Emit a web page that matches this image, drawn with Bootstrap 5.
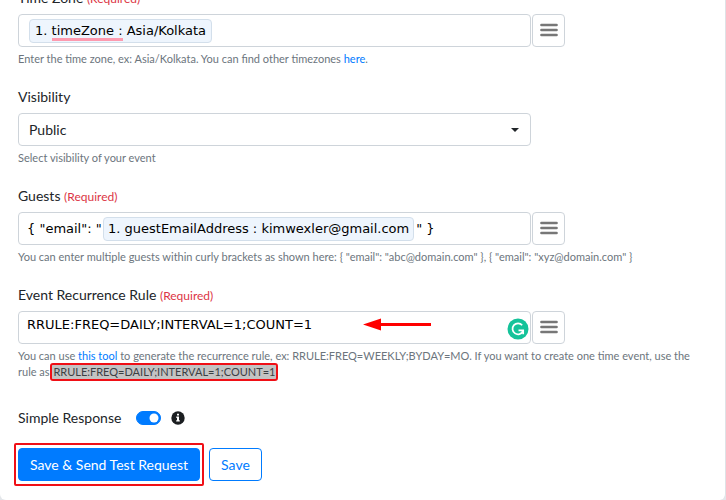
<!DOCTYPE html>
<html lang="en">
<head>
<meta charset="utf-8">
<meta name="viewport" content="width=device-width, initial-scale=1">
<title>Event settings</title>
<link href="https://cdn.jsdelivr.net/npm/bootstrap@5.3.0/dist/css/bootstrap.min.css" rel="stylesheet">
<style>
:root { --line: #ced4da; --blue: #007bff; }
body { background: #e3e6ea; font-family: Lato, "Open Sans", sans-serif; font-size: 14px; line-height: 20px; color: #212529; height: 100vh; overflow: hidden; }
a { color: var(--blue); text-decoration: none; }
.panel { background: #fff; border-right: 1px solid #dee2e6; border-radius: 0 0 6px 6px; padding: 0 18px; height: 100vh; display: flow-root; }
/* the form is shown scrolled slightly past its first label */
.scrolled { margin-top: -12px; }
.group { margin-bottom: 20px; }
.group-label { display: block; margin-bottom: 6px; line-height: 20px; font-size: 14px; }
.req { color: #dc3545; font-size: 12px; line-height: 14px; }
.hint { color: #6c757d; font-size: 11px; line-height: 16px; margin-top: 4px; padding-right: 12px; }
.field-row { max-width: 547px; gap: 1px; }
.field { border: 1px solid var(--line); border-radius: 4px; height: 33px; padding: 0 8px; min-width: 0; font-family: "DejaVu Sans", Verdana, sans-serif; font-size: 13px; }
.field input { border: 0; padding: 0; background: none; outline: 0; color: #000; min-width: 0; height: 24px; }
.field .lead-text { width: 76px; flex: none; }
.field .tail-text { margin-left: 2px; }
.token { background: #eef5fd; border: 1px solid #d3dfeb; border-radius: 4px; padding: 0 4px; height: 24px; line-height: 22px; color: #000; white-space: nowrap; }
.token-first { margin-left: 2px; padding: 0 5px; }
.spell { display: inline-block; line-height: 22px; background: linear-gradient(#fd9aae, #fd9aae) left bottom 1px / 100% 3px no-repeat; }
.menu-btn { width: 33px; height: 33px; border: 1px solid var(--line); border-radius: 4px; background: #fff; padding: 0 0 3px; flex: none; }
.pick { max-width: 513px; height: 33px; padding: 0 32px 0 10px; font-size: 14px; border: 1px solid var(--line); border-radius: 4px; background-size: 8px 4px; background-position: right 11px center; color: #212529;
  background-image: url("data:image/svg+xml,%3Csvg xmlns='http://www.w3.org/2000/svg' viewBox='0 0 8 4'%3E%3Cpath d='M0 0h8L4 4z' fill='%23212529'/%3E%3C/svg%3E"); }
.arrow { position: absolute; right: 98px; top: 6px; }
.checker { position: absolute; right: 1px; top: 6px; }
.marked { background: #c3c3c3; color: #3c4043; outline: 2px solid #f00f16; border-radius: 1px; padding: 0 1px; line-height: 14px; display: inline-block; }
.toggle-row { margin-top: 28px; margin-bottom: 15px; }
.toggle-row .toggle-box { margin: 0 10px 0 15px; }
.form-switch .toggle { width: 25px; height: 14px; margin: 0; border-color: var(--blue); }
.toggle:checked { background-color: var(--blue); }
.actions { gap: 5px; margin-left: -4px; }
.ring { border: 2px solid #f00f16; border-radius: 2px; padding: 3px 2px; }
.act { font-size: 14px; line-height: 20px; padding: 5px 11px; height: 33px; border-radius: 4px; }
.btn-primary.act { background: var(--blue); border-color: var(--blue); }
.btn-outline-primary.act { color: var(--blue); border-color: var(--blue); }
</style>
</head>
<body>
<svg class="d-none" aria-hidden="true">
  <symbol id="bars" viewBox="0 0 18 14"><path d="M1.500 2h15M1.500 7h15M1.500 12h15" stroke="#777" stroke-width="2.700" stroke-linecap="round"/></symbol>
</svg>
<main class="panel">
<form>
  <div class="group scrolled">
    <label class="group-label" for="tz">Time Zone <span class="req">(Required)</span></label>
    <div class="field-row d-flex">
      <div class="field flex-grow-1 d-flex align-items-center">
        <span class="token token-first">1. <span class="spell">timeZone :</span> Asia/Kolkata</span>
        <input class="flex-grow-1" id="tz" type="text">
      </div>
      <button class="menu-btn" type="button" aria-label="Insert time zone value"><svg width="18" height="14"><use href="#bars"/></svg></button>
    </div>
    <div class="hint">Enter the time zone, ex: Asia/Kolkata. You can find other timezones <a href="#">here</a>.</div>
  </div>

  <div class="group">
    <label class="group-label" for="vis">Visibility</label>
    <select class="form-select pick" id="vis"><option>Public</option><option>Private</option></select>
    <div class="hint">Select visibility of your event</div>
  </div>

  <div class="group">
    <label class="group-label" for="guests">Guests <span class="req">(Required)</span></label>
    <div class="field-row d-flex">
      <div class="field flex-grow-1 d-flex align-items-center">
        <input class="lead-text" id="guests" type="text" value='{ "email": "'>
        <span class="token">1. guestEmailAddress : kimwexler@gmail.com</span>
        <input class="tail-text flex-grow-1" type="text" aria-label="Guests, end" value='" }'>
      </div>
      <button class="menu-btn" type="button" aria-label="Insert guest value"><svg width="18" height="14"><use href="#bars"/></svg></button>
    </div>
    <div class="hint">You can enter multiple guests within curly brackets as shown here: { "email": "abc@domain.com" }, { "email": "xyz@domain.com" }</div>
  </div>

  <div class="group">
    <label class="group-label" for="rule">Event Recurrence Rule <span class="req">(Required)</span></label>
    <div class="field-row d-flex">
      <div class="field flex-grow-1 d-flex position-relative">
        <input class="flex-grow-1" id="rule" type="text" value="RRULE:FREQ=DAILY;INTERVAL=1;COUNT=1">
        <svg class="arrow" width="69" height="13" viewBox="0 0 69 13" aria-hidden="true"><path d="M0 6.500 18 .5V5h50v3H18v4.500z" fill="#f00"/></svg>
        <svg class="checker" width="22" height="22" viewBox="0 0 22 22" aria-hidden="true"><circle cx="11" cy="11" r="10.500" fill="#15c39a"/><path d="M15.200 7.200A5.500 5.500 0 1 0 16 13.200M11.500 12.300H16.200V16.300" fill="none" stroke="#fff" stroke-width="1.700"/></svg>
      </div>
      <button class="menu-btn" type="button" aria-label="Insert rule value"><svg width="18" height="14"><use href="#bars"/></svg></button>
    </div>
    <div class="hint">You can use <a href="#">this tool</a> to generate the recurrence rule, ex: RRULE:FREQ=WEEKLY;BYDAY=MO. If you want to create one time event, use the rule as <span class="marked">RRULE:FREQ=DAILY;INTERVAL=1;COUNT=1</span></div>
  </div>

  <div class="toggle-row d-flex align-items-center">
    <label for="simple">Simple Response</label>
    <div class="toggle-box form-switch p-0 d-flex"><input class="form-check-input toggle" type="checkbox" role="switch" id="simple" checked></div>
    <svg width="14" height="14" viewBox="0 0 14 14" role="img" aria-label="More information"><circle cx="7" cy="7" r="6.700" fill="#1b1e21"/><path d="M6 2.700h2v1.900H6zM5.300 5.600H8v3.700h.8v1.300H5.200V9.300H6V6.900h-.7z" fill="#fff"/></svg>
  </div>

  <div class="actions d-flex align-items-center">
    <div class="ring d-flex"><button class="btn btn-primary act" type="button">Save &amp; Send Test Request</button></div>
    <button class="btn btn-outline-primary act" type="button">Save</button>
  </div>
</form>
</main>
<script src="https://cdn.jsdelivr.net/npm/bootstrap@5.3.0/dist/js/bootstrap.bundle.min.js"></script>
</body>
</html>
